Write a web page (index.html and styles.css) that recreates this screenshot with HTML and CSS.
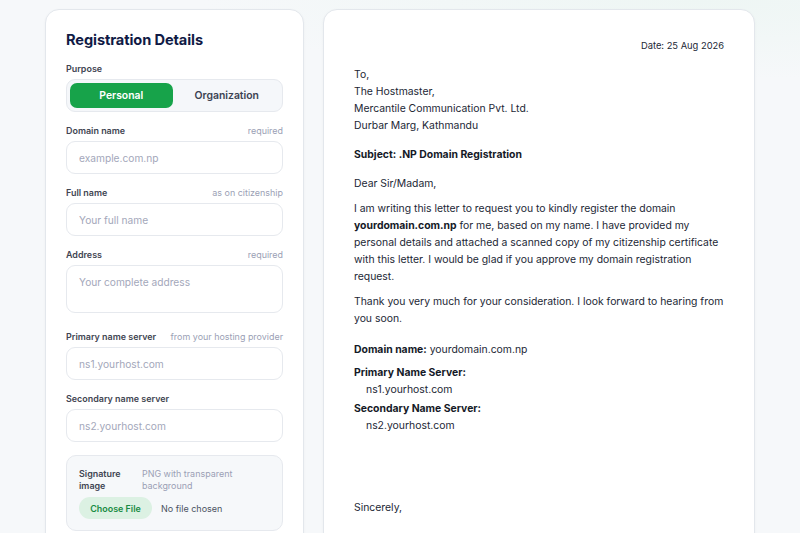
FILE: index.html
```html
<!DOCTYPE html>
<html lang="en">
<head>
<meta charset="utf-8">
<title>.NP Domain Registration Letter</title>
<link rel="stylesheet" href="styles.css">
</head>
<body>
<main class="layout">
  <section class="card form-card">
    <h1 class="title">Registration Details</h1>

    <div class="field">
      <div class="label-row"><span class="label">Purpose</span></div>
      <div class="segment">
        <button class="seg-btn active">Personal</button>
        <button class="seg-btn">Organization</button>
      </div>
    </div>

    <div class="field">
      <div class="label-row"><span class="label">Domain name</span><span class="hint">required</span></div>
      <input class="input" placeholder="example.com.np">
    </div>

    <div class="field">
      <div class="label-row"><span class="label">Full name</span><span class="hint">as on citizenship</span></div>
      <input class="input" placeholder="Your full name">
    </div>

    <div class="field field-area">
      <div class="label-row"><span class="label">Address</span><span class="hint">required</span></div>
      <textarea class="input textarea" placeholder="Your complete address"></textarea>
    </div>

    <div class="field">
      <div class="label-row"><span class="label">Primary name server</span><span class="hint">from your hosting provider</span></div>
      <input class="input" placeholder="ns1.yourhost.com">
    </div>

    <div class="field">
      <div class="label-row"><span class="label">Secondary name server</span></div>
      <input class="input" placeholder="ns2.yourhost.com">
    </div>

    <div class="upload">
      <div class="upload-head">
        <span class="label upload-label">Signature image</span>
        <span class="hint upload-hint">PNG with transparent background</span>
      </div>
      <div class="file-row">
        <span class="file-btn">Choose File</span>
        <span class="file-name">No file chosen</span>
      </div>
    </div>
  </section>

  <section class="card letter">
    <p class="date">Date: 25 Aug 2026</p>
    <p class="block">To,<br>The Hostmaster,<br>Mercantile Communication Pvt. Ltd.<br>Durbar Marg, Kathmandu</p>
    <p class="block"><strong>Subject: .NP Domain Registration</strong></p>
    <p class="block greet">Dear Sir/Madam,</p>
    <p class="body-p">I am writing this letter to request you to kindly register the domain <strong>yourdomain.com.np</strong>&nbsp;for me, based on my name. I have provided my personal details and attached a scanned copy of my citizenship certificate with this letter. I would be glad if you approve my domain registration request.</p>
    <p class="body-p">Thank you very much for your consideration. I look forward to hearing from you soon.</p>
    <div class="details">
      <p class="detail-line"><strong>Domain name:</strong> yourdomain.com.np</p>
      <div class="server">
        <strong>Primary Name Server:</strong>
        <span class="server-val">ns1.yourhost.com</span>
      </div>
      <div class="server">
        <strong>Secondary Name Server:</strong>
        <span class="server-val">ns2.yourhost.com</span>
      </div>
    </div>
    <p class="closing">Sincerely,</p>
  </section>
</main>
</body>
</html>
```

FILE: styles.css
```css
* { box-sizing: border-box; }
html, body { margin: 0; padding: 0; }
body {
  font-family: Inter, "Noto Sans", "Liberation Sans", sans-serif;
  background:
    radial-gradient(ellipse 500px 80px at 700px 0, #eef6f4 0%, rgba(238,246,244,0) 100%),
    #f6f8fa;
  min-height: 533px;
  overflow: hidden;
  color: #1f2937;
}
.layout {
  display: grid;
  grid-template-columns: 259px 432px;
  column-gap: 19px;
  padding: 9px 45px 0;
  align-items: start;
}
.card {
  background: #fff;
  border: 1px solid #e3e7ec;
  border-radius: 14px;
  box-shadow: 0 1px 3px rgba(16, 24, 40, 0.04);
}
.form-card {
  padding: 20px 20px 20px;
  min-height: 560px;
}
.title {
  margin: 0 0 12px;
  font-size: 14.6px;
  line-height: 20px;
  font-weight: 700;
  color: #101a45;
  letter-spacing: -0.1px;
}
.field { margin-bottom: 12px; }
.field-area { margin-bottom: 17px; }
.label-row {
  display: flex;
  justify-content: space-between;
  align-items: center;
  height: 12px;
  margin-bottom: 5px;
}
.label {
  font-size: 8.95px;
  font-weight: 600;
  color: #3f4552;
}
.hint {
  font-size: 8.95px;
  color: #9b9fb5;
}
.segment {
  display: grid;
  grid-template-columns: 1fr 1fr;
  height: 33px;
  padding: 3px;
  background: #f5f7fa;
  border: 1px solid #e6e9ee;
  border-radius: 9px;
}
.seg-btn {
  border: 0;
  background: transparent;
  font-family: inherit;
  font-size: 10.4px;
  font-weight: 600;
  color: #3b4252;
  border-radius: 7px;
  padding: 0;
}
.seg-btn.active {
  background: #17a34a;
  color: #fff;
  margin-right: 2px;
}
.input {
  display: block;
  width: 100%;
  height: 33px;
  padding: 0 12px;
  border: 1px solid #e6e9ee;
  border-radius: 9px;
  background: #fff;
  font-family: inherit;
  font-size: 10.2px;
  color: #1f2937;
  outline: none;
}
.input::placeholder { color: #a3a7ba; }
.textarea {
  height: 48px;
  padding-top: 10px;
  resize: none;
}
.upload {
  margin-top: 13px;
  padding: 12px 12px 11px;
  background: #f6f8fa;
  border: 1px solid #e6e9ee;
  border-radius: 10px;
}
.upload-head {
  display: flex;
  gap: 13px;
  line-height: 12px;
  margin-bottom: 5px;
}
.upload-label { width: 50px; }
.upload-hint { width: 100px; }
.file-row {
  display: flex;
  align-items: center;
  gap: 9px;
}
.file-btn {
  display: inline-flex;
  align-items: center;
  justify-content: center;
  width: 73px;
  height: 22px;
  border-radius: 11px;
  background: #dcf1e3;
  color: #1a8c45;
  font-size: 8.95px;
  font-weight: 600;
}
.file-name {
  font-size: 9px;
  color: #4b5261;
}

.letter {
  padding: 30px 30px 30px 30px;
  min-height: 560px;
  font-size: 10.4px;
  line-height: 17px;
  color: #222735;
}
.letter p { margin: 0; }
.letter strong { font-weight: 700; color: #151a27; }
.date {
  text-align: right;
  font-size: 9.33px;
  line-height: 12px;
  margin-bottom: 14px !important;
}
.block { margin-bottom: 12px !important; }
.greet { margin-bottom: 8px !important; }
.body-p { margin-bottom: 8px !important; }
.details { margin-top: 14px; }
.detail-line { margin-bottom: 7px !important; }
.server { display: flex; flex-direction: column; margin-bottom: 3px; }
.server strong { line-height: 16px; }
.server-val { padding-left: 12px; }
.closing { margin-top: 65px !important; }
```
